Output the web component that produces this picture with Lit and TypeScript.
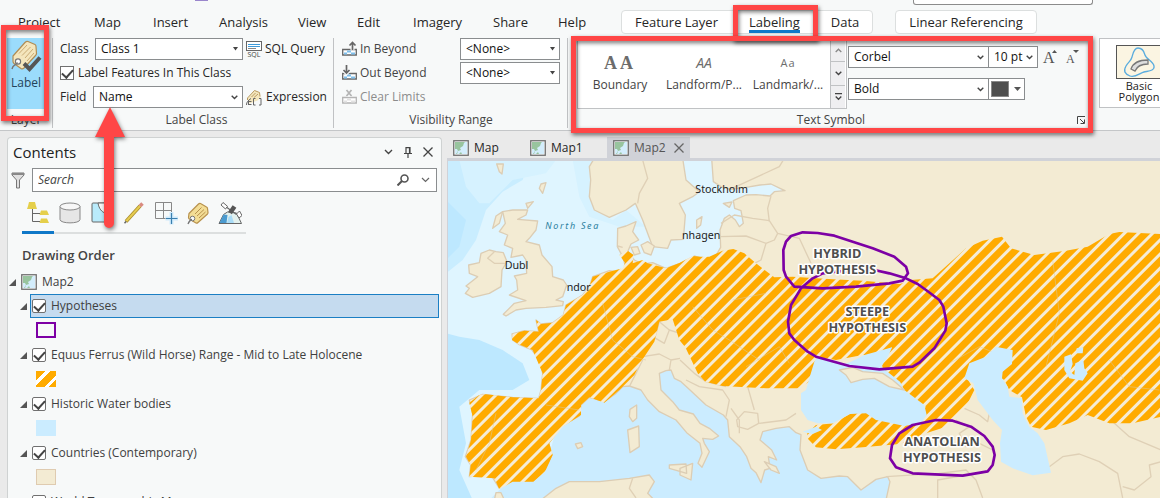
import { LitElement, html, css } from "lit";
import { customElement } from "lit/decorators.js";
import { classMap } from "lit/directives/class-map.js";

const caret = html`<svg class="mark" width="5" height="4" viewBox="0 0 5 4"><path d="M0 0h5L2.5 3.4z" fill="#444" /></svg>`;
const chevron = html`<svg class="mark" width="7" height="5" viewBox="0 0 7 5"><path d="M.7.8 3.5 3.6 6.3.8" fill="none" stroke="#444" stroke-width="1.4" /></svg>`;

const tagIcon = html`<svg width="24" height="24" viewBox="0 0 24 24">
  <path d="M3 12.500 12.500 3q1-1 2-.5l6 3.500q1 .5 1 1.500l.5 4q0 1-.5 1.500L12 21.500q-1 1-2 .5l-6-3.500q-1.500-.5-1.500-2z" fill="#f3dd95" stroke="#b8924e" stroke-width="1.200" />
  <path d="m9 13 6.500-6.500M11 15l7-6.500M13 17l6.500-6" stroke="#b8924e" fill="none" />
  <circle cx="6.500" cy="17.500" r="2.300" fill="#f7f9f9" stroke="#777" />
  <path d="M6 18.500C4 19 3 20.500 2 23" stroke="#777" stroke-width="1.300" fill="none" />
</svg>`;

const bigTag = html`<svg width="32" height="32" viewBox="0 0 32 32">
  <path d="M3 16 15 2.500q1.500-1.500 3-1l7 3q1 .5 1 2l.5 7q0 1-1 2L14 28q-1.500 1.500-3 .5l-7-5q-1-1-1-2z" fill="#f4e6bd" stroke="#b08d55" stroke-width="1.200" />
  <path d="m9 13.500 8-8.500M12 15.500 20.500 7M15 18l8-9M17 21l7-8" stroke="#c9ab74" fill="none" />
  <circle cx="8" cy="21.500" r="2.600" fill="#fff" stroke="#777" stroke-width="1.200" />
  <path d="M7.500 22.500C6 26 3 24 2 29" stroke="#777" stroke-width="1.400" fill="none" />
  <path d="m14 23.500 5.500 5.500L30 17.500" stroke="#555" stroke-width="4" fill="none" />
</svg>`;

const sqlIcon = html`<svg width="16" height="18" viewBox="0 0 16 18">
  <rect x=".5" y="1.500" width="15" height="9" fill="#fff" stroke="#666" />
  <path d="M2 4.500h12M2 6.500h12" stroke="#3d9ad9" /><path d="M2 8.500h8" stroke="#888" />
  <text x="8" y="17" font-size="7" text-anchor="middle" fill="#444">SQL</text>
</svg>`;

const exprIcon = html`<svg width="17" height="17" viewBox="0 0 17 17">
  <path d="M1.500 9.500 8.500 1.500l5 2 1 5-3 3-8 3z" fill="#f4e6bd" />
  <path d="m1.500 11v-2L8.500 1.500l5 2 .5 4M5.500 8l4-4M8 8.500l4-3.500" stroke="#b89a60" fill="none" />
  <path d="M.5 16C.5 13 2 11.500 5 9.500M2.500 12.500h3M2.500 15.500h3M2.500 12v4M9.500 9.500H7.500v6.500h2M13 9.500h2v6.500h-2" stroke="#666" fill="none" />
</svg>`;

const beyondIcon = (kind: "in" | "out" | "clear") => {
  const c = kind === "clear" ? "#b4b4b4" : "#666";
  const b = kind === "clear" ? "#e2e2e2" : "#7fc0ec";
  const arrow =
    kind === "in" ? "M10.500 9V1.500M7.500 4.500l3-3 3 3" : kind === "out" ? "M4.500 0v7.500M1.500 5l3 3 3-3" : "m4.500 1 5 6m0-6-5 6";
  return html`<svg width="15" height="16" viewBox="0 0 15 16">
    <path d="M.7 8.500h13.600v5.500H.7z" fill="#fff" stroke=${c} stroke-width="1.300" />
    <path d="M2 11.500h3v2H2zM5 9.500h4v2H5zM9 11.500h4v2H9z" fill=${b} />
    <path d=${arrow} stroke="#f7f9f9" stroke-width="4" fill="none" />
    <path d=${arrow} stroke=${c} stroke-width="1.700" fill="none" />
  </svg>`;
};

const mapIcon = html`<svg width="16" height="16" viewBox="0 0 16 16">
  <rect x=".75" y=".75" width="14.500" height="14.500" fill="#fff" stroke="#6e6e6e" stroke-width="1.300" />
  <rect x="2" y="2" width="12" height="12" fill="#98c49e" />
  <path d="M14 2v12H9l-1-2-2 2H4l1-3 3-1-1-2 3-2 1-3 1-1z" fill="#d3edfc" />
  <path d="M2 9h2l1 2-2 3H2z" fill="#d3edfc" />
</svg>`;

const tocIcons = [
  html`<svg width="24" height="24" viewBox="0 0 24 24"><path d="M6.500 8v12.500H14M6.500 12.500H14" stroke="#666" fill="none" /><path d="M3 1h6l1 4 1 3H1l1-3zM15 9.500h6l2 4.500h-9.500zM15 17.500h6l2 4.500h-9.500z" fill="#e5cf4b" /></svg>`,
  html`<svg width="24" height="24" viewBox="0 0 24 24"><path d="M2 5.500v13c0 4.500 20 4.500 20 0v-13" fill="#e6e6e6" stroke="#888" /><ellipse cx="12" cy="5.500" rx="10" ry="3.500" fill="#f7f7f7" stroke="#888" /></svg>`,
  html`<svg width="24" height="24" viewBox="0 0 24 24"><rect x="2" y="2" width="20" height="19" rx="1" fill="#b9ebfb" stroke="#666" /><path d="M8 2c1 6 4 9 7 10l7-10z" fill="#f7f9f9" stroke="#666" /></svg>`,
  html`<svg width="24" height="24" viewBox="0 0 24 24"><path d="M4 20.500 18 5" stroke="#a98d2c" stroke-width="3.600" /><path d="M4 20.500 18 5" stroke="#e6cc50" stroke-width="2" /><path d="m18 5 2.500-2.500" stroke="#d98a80" stroke-width="3.500" /><path d="m2.500 22.200 1.800-2" stroke="#666" stroke-width="1.500" /></svg>`,
  html`<svg width="24" height="24" viewBox="0 0 24 24"><path d="M1.500 1.500h16v16h-16zM9.500 1.500v16M1.500 9.500h16" fill="none" stroke="#888" /><path d="M17.500 11v12.500M11.500 17.500H24" stroke="#cfeafc" stroke-width="4" /><path d="M17.500 12v11M12 17.500h11.500" stroke="#3a7fae" stroke-width="1.200" /></svg>`,
  tagIcon,
  html`<svg width="24" height="24" viewBox="0 0 24 24">
    <path d="m1 22.500 4.500-9 4-2.500 9 1L23.500 22.500z" fill="#e3f1ee" stroke="#666" /><path d="m1.500 22 4-8.500 4 .5-1 8z" fill="#4b9bd0" /><path d="m9 22 1.500-6 3-2 2.500 8z" fill="#a9dcf7" />
    <path d="m5 1.500 4.500 3.800L7.500 8 3 4zM18.500 13l3-3 2.500 4.500-3 2.500z" fill="#fff" stroke="#666" />
    <path d="m9 6.500 9.500 7" stroke="#666" stroke-width="1.200" /><path d="m12 12 4.500-6.500" stroke="#555" stroke-width="4.500" /></svg>`,
];

interface Layer { name: string; cls: string; selected?: boolean }
const layers: Layer[] = [
  { name: "Hypotheses", cls: "outline", selected: true },
  { name: "Equus Ferrus (Wild Horse) Range - Mid to Late Holocene", cls: "striped" },
  { name: "Historic Water bodies", cls: "water" },
  { name: "Countries (Contemporary)", cls: "land" },
  { name: "World Topographic Map", cls: "land" },
];

@customElement("map-canvas")
class MapCanvas extends LitElement {
  static styles = css`
    :host { display: block; min-height: 0; overflow: hidden; background: #f3ebd3; }
    svg { display: block; width: 100%; height: 100%; }
    .land { fill: #f3ebd3; stroke: #dccdb4; stroke-width: 4; stroke-linejoin: round; }
    .border { fill: none; stroke: #dfd0b6; stroke-width: 4; stroke-linejoin: round; }
    .faint { fill: none; stroke: #d8c9a8; stroke-width: 3; opacity: 0.5; }
    .sea { fill: #cbecff; }
    .ring { fill: none; stroke: #7d00a5; stroke-width: 8; stroke-linejoin: round; }
    .place { font: 32px "Noto Sans", sans-serif; fill: #222; }
    .ocean { font: italic 27px "Noto Sans", sans-serif; fill: #2c7f9e; letter-spacing: 5px; }
    .label { font: bold 38px "Open Sans", sans-serif; fill: #4e4e4e; stroke: #fff; stroke-width: 9; stroke-linejoin: round; paint-order: stroke; text-anchor: middle; }
  `;
  render() {
    return html`<svg viewBox="6 3 2136 1011" preserveAspectRatio="xMinYMin slice" role="img" aria-label="Map of Europe">
      <defs>
        <pattern id="hatch" width="30" height="30" patternUnits="userSpaceOnUse" patternTransform="rotate(-45)">
          <rect width="30" height="30" fill="#ffab00" /><rect width="30" height="9" fill="#f5ecd6" />
        </pattern>
      </defs>
      <rect width="2145" height="1020" fill="#dff5ff" />
      <path fill="#c9edff" d="M0 0H250L230 60 170 95 120 150 90 240 50 300 0 340z" />
      <path fill="#d6f2ff" d="M40 0H330L300 40 200 60 130 130 100 130 60 80zM380 0H440V150L500 180 540 150 600 200 520 200 430 170 400 110z" />
      <path fill="#bde8ff" d="M0 120 60 180 40 260 0 300zM0 520 40 530 100 540 170 570 230 610 250 660 200 690 100 690 40 740 60 850 40 930 80 1020H0z" />
      <path class="sea" d="M130 1020 190 960 300 920 330 810 420 710 560 670 660 620 1100 740 1350 900V1020z" />

      <path class="land" d="M797 -5 802 65 825 80 852 88 900 82 942 75 975 72 1002 85 1017 92 985 95 972 108 930 104 900 105 862 122 866 145 885 152 892 190 880 200 868 180 850 165 835 175 822 210 824 262 808 290 775 298 745 288 702 310 660 325 620 308 590 312 565 300 545 275 555 252 578 240 560 215 570 185 540 198 515 205 514 260 530 290 540 325 515 335 490 332 440 350 430 380 410 405 360 435 352 465 320 488 285 492 270 480 278 515 235 512 198 522 200 540 218 553 258 570 280 600 290 640 285 690 278 715 200 712 110 703 70 720 80 760 75 840 58 890 74 915 70 950 135 945 160 985 195 962 260 962 295 930 318 885 308 850 345 800 400 768 405 735 430 712 475 725 510 700 530 680 550 678 585 690 605 720 640 755 690 780 722 818 762 850 768 880 756 910 768 922 790 875 775 850 770 835 800 838 818 828 790 805 762 790 742 762 700 750 680 725 645 690 640 640 660 632 675 630 685 655 705 665 732 690 780 735 832 765 845 780 850 830 882 860 902 890 915 925 930 938 945 968 956 930 972 925 967 890 992 900 977 870 942 840 950 815 990 805 1030 800 1050 818 1065 824 1062 870 1085 930 1125 955 1180 948 1205 950 1245 990 1290 958 1325 950 1332 965 1320 1020H2150V-5z" />
      <path class="land" d="M445 -5 430 20 434 60 430 110 445 150 490 172 540 150 568 130 590 180 620 260 665 265 675 240 712 238 718 165 700 130 740 110 760 95 720 60 710 -5z" />
      <path class="land" d="M170 155 200 150 245 150 240 165 215 178 275 183 270 210 250 235 240 245 280 255 288 285 318 320 320 350 352 360 362 375 350 410 330 420 352 425 350 437 300 442 240 445 210 450 180 468 172 463 205 430 240 422 190 405 215 390 212 360 205 348 242 340 240 300 230 285 195 292 200 265 175 255 185 225 160 215 178 190z" />
      <path class="land" d="M105 280 130 270 150 275 172 278 183 305 168 330 165 380 130 400 80 412 58 400 70 385 60 378 95 350 70 340 68 315 100 308z" />
      <path class="land" d="M150 168 170 155 160 190 140 205zM285 72 300 68 290 100 280 85zM240 130 262 125 245 145zM152 12H172L168 42 160 35zM555 262 575 260 582 280 565 285zM585 255 605 245 625 258 615 285 595 278z" />
      <path class="land" d="M752 180 768 170 764 195 752 205zM832 130 858 126 850 142zM552 748 572 735 572 775 560 785 550 770zM545 810 578 798 580 860 552 878zM388 852 405 848 410 860 395 866zM670 915 720 912 722 940 670 925zM702 925 740 910 735 960 702 945zM955 905 990 920 1000 940 975 930z" />
      <path class="land" d="M145 1020 150 998 165 998 175 1020zM285 1020 330 985 370 965 460 965 550 955 610 945 625 965 605 1000 625 1020z" />

      <g class="border">
        <path d="M590 0 605 55 580 100 575 130M145 275 125 295 145 310 180 310M515 258 530 262M640 485 670 510 702 520M670 510 655 550 620 530M590 590 640 582 675 600 702 595M550 680 565 650 590 600M675 600 670 630M560 955 550 985 570 1014M640 485 625 540" />
        <path d="M852 88 1000 20 1012 0M975 108 965 145 970 185M825 190 865 165 920 175 970 182 995 220 985 240 960 250 900 228 822 230M995 220 1060 235 1095 310M960 250 945 300 925 310M702 600 745 640 780 665 840 680M720 660 760 680 830 690 850 720 840 770M855 745 880 780 880 820M872 780 895 755 935 760 938 790 905 808 875 800zM905 680 925 750M940 790 1020 780 1050 760M1320 950 1480 940 1560 930 1590 960 1610 1014M1475 1014V960L1560 945" />
        <path d="M1555 745 1600 765 1625 785 1632 750M1530 780 1570 800 1540 820 1560 860 1600 850 1640 870M1810 920 1850 890 1900 882 1960 905 2015 940 2030 1014M2030 980 2065 990 2115 950 2110 915 2145 905M2000 785 2050 830 2145 870" />
      </g>

      <path fill="url(#hatch)" d="M520 285 545 272 563 285 560 310 590 300 605 310 660 325 702 308 740 288 765 290 790 290 830 272 862 267 895 280 930 310 985 352 1040 350 1160 358 1250 362 1362 372 1395 360 1460 355 1560 265 1610 242 1668 230 1695 265 1765 285 1860 272 1925 260 1990 222 2020 216 2145 222V770L2060 790 1990 790 1925 765 1870 790 1800 810 1755 800 1740 770 1728 712 1690 690 1675 660 1640 640 1560 650 1585 690 1560 740 1500 800 1440 820 1362 852 1250 862 1170 868 1110 862 1084 835 1084 820 1110 795 1165 790 1215 760 1265 757 1320 785 1400 790 1440 740 1400 720 1360 685 1310 625 1305 590 1250 585 1170 600 1110 590 1100 660 1055 685 960 685 830 678 778 665 755 640 718 562 700 540 680 478 640 485 625 545 585 605 565 645 520 690 475 728 430 712 405 735 405 765 350 800 310 850 320 885 297 935 262 965 200 965 160 988 145 955 70 950 74 915 60 890 75 840 80 770 70 728 100 705 120 703 200 712 278 715 285 690 290 640 260 570 218 553 198 540 200 522 235 512 278 515 270 480 285 492 320 488 352 465 360 435 410 405 430 380 440 350 490 335 530 325 537 308z" />
      <g class="faint"><path d="M470 430 500 540 560 590 600 600M300 735 400 750M150 760 130 850 90 930M740 440 800 510 850 540 940 600M860 420 960 400M1510 610 1600 560 1650 580M1820 300 1840 460 1800 620M1990 600 2050 680 2140 690M900 620 1000 560 1030 610" /></g>

      <path class="sea" d="M1105 605 1115 590 1150 600 1185 615 1215 605 1255 585 1310 570 1338 562 1325 590 1305 620 1330 640 1362 665 1375 690 1435 735 1442 765 1425 790 1375 798 1330 788 1290 780 1260 760 1212 762 1160 790 1115 790 1085 780 1065 750 1065 700 1080 690 1090 655z" />
      <path class="land" d="M1180 630 1220 622 1250 635 1310 640 1340 660 1375 690 1330 680 1285 655 1250 658 1215 668 1200 645z" />
      <path class="sea" d="M1240 618 1280 590 1338 562 1325 590 1305 620 1312 636 1260 632zM1070 815 1110 800 1128 810 1100 822z" />
      <path class="sea" d="M1650 560 1672 565 1700 570 1698 612 1670 635 1668 655 1685 680 1690 710 1728 715 1730 760 1750 800 1775 820 1795 850 1815 938 1760 946 1700 925 1665 905 1662 850 1668 810 1640 780 1595 720 1582 670 1555 655 1570 610 1620 590z" />
      <path class="sea" d="M1855 590 1875 583 1880 612 1872 635 1885 645 1888 610 1912 600 1915 625 1925 640 1910 662 1870 655 1855 630zM1892 565 1912 562 1910 580 1890 580z" />
      <path class="sea" d="M1005 815 1020 810 1015 820zM1170 975 1185 960 1190 985z" />

      <text class="ocean" x="298" y="207">North Sea</text>
      <text class="place" x="176" y="326">Dubl</text>
      <text class="place" x="362" y="393">ndor</text>
      <text class="place" x="748" y="99">Stockholm</text>
      <text class="place" x="708" y="236">nhagen</text>

      <path class="ring" d="M1070 217 1115 219 1165 227 1280 265 1345 290 1380 320 1386 340 1370 362 1330 370 1230 380 1130 385 1045 380 1020 350 1013 330 1012 270 1020 245 1035 228z" />
      <path class="ring" d="M1130 340 1175 334 1285 330 1330 340 1380 355 1415 372 1440 390 1480 420 1492 440 1502 490 1498 512 1465 565 1420 608 1400 620 1300 628 1210 618 1110 590 1085 575 1045 540 1030 520 1026 485 1035 435 1065 385 1100 355z" />
      <path class="ring" d="M1400 795 1470 780 1520 782 1575 800 1615 828 1640 860 1646 885 1640 915 1625 934 1550 947 1400 940 1350 922 1332 895 1338 855 1360 820z" />
      <text class="label"><tspan x="1174" y="294">HYBRID</tspan><tspan x="1174" y="342">HYPOTHESIS</tspan></text>
      <text class="label"><tspan x="1264" y="468">STEEPE</tspan><tspan x="1264" y="516">HYPOTHESIS</tspan></text>
      <text class="label"><tspan x="1488" y="858">ANATOLIAN</tspan><tspan x="1488" y="906">HYPOTHESIS</tspan></text>
    </svg>`;
  }
}

@customElement("app-root")
class AppRoot extends LitElement {
  static styles = css`
    :host { display: flex; flex-direction: column; position: relative; height: 100vh; overflow: hidden; background: #eaeaea; color: #262626; font: 12px/16px "Open Sans", sans-serif; }
    * { box-sizing: border-box; }
    button, input, select { font: inherit; color: inherit; margin: 0; }
    button { border: 0; padding: 0; background: none; text-align: left; }
    svg { display: block; flex: none; }
    .top { background: #f7f9f9; border-bottom: 1px solid #c4c6c8; flex: none; }
    .titlebar { display: flex; height: 10px; padding: 0 67px 0 195px; justify-content: space-between; }
    .logo { width: 13px; height: 1px; background: #9a86cc; }
    .command { width: 180px; height: 5px; border: 1px solid #8c8c8c; border-top: 0; border-radius: 0 0 3px 3px; background: #fff; }
    .tabs { display: flex; height: 25px; padding-left: 18px; font-size: 13px; align-items: flex-start; }
    .plain { display: grid; grid-template-columns: 76px 59px 66px 79px 59px 56px 80px 65px 63px; }
    .tabs button { height: 24px; }
    .set { display: flex; gap: 31px; padding: 0 13px; border: 1px solid #dcdfdf; border-radius: 4px; background: #fff; height: 24px; }
    .set button { height: 22px; }
    .set + .set { margin-left: 22px; }
    .set .active { border-bottom: 3px solid #0f78c8; padding-top: 3px; }
    .ribbon { display: flex; padding-top: 3px; height: 95px; }
    .group { display: flex; flex-direction: column; border-right: 1px solid #c0c2c4; height: 90px; }
    .body { display: flex; flex: 1; min-height: 0; }
    .caption { text-align: center; color: #444; height: 16px; line-height: 16px; flex: none; }
    .layer { width: 53px; }
    .labelbtn { width: 38px; margin-left: 7px; height: 71px; background: #9bdcfc; display: flex; flex-direction: column; align-items: center; gap: 3px; padding-top: 2px; color: #24435a; }
    .class { width: 281px; padding-left: 7px; }
    .rows { display: flex; flex-direction: column; gap: 2px; width: 100%; }
    .row { display: flex; align-items: center; height: 22px; }
    .row .lab { flex: 1; white-space: nowrap; }
    .cmd { display: flex; align-items: center; gap: 3px; width: 90px; padding-left: 3px; white-space: nowrap; }
    .combo { display: grid; height: 22px; }
    .combo select { grid-area: 1 / 1; appearance: none; border: 1px solid #8a8d8f; border-radius: 0; background: #fff; padding: 0 5px; width: 100%; height: 22px; color: #111; outline: 0; }
    .combo .mark { grid-area: 1 / 1; align-self: center; justify-self: end; margin-right: 5px; pointer-events: none; }
    .w148 { width: 148px; } .w150 { width: 150px; } .w100 { width: 100px; } .w141 { width: 141px; } .w50 { width: 50px; }
    input[type="checkbox"] { appearance: none; width: 14px; height: 14px; border: 1px solid #707070; background: #fff; display: grid; place-items: center; flex: none; }
    input[type="checkbox"]:checked::after { content: ""; width: 9px; height: 5px; border: solid #444; border-width: 0 0 2px 2px; transform: translateY(-1px) rotate(-48deg); }
    .check { display: flex; gap: 4px; align-items: center; }
    .vis { width: 234px; padding: 0 7px 0 8px; }
    .vis .lab { display: flex; align-items: center; gap: 3px; color: #444; }
    .vis .off { color: #8c8c8c; }
    .symbol { width: 524px; padding: 0 7px 0 9px; border: 0; }
    .symbol .caption { display: grid; grid-template-columns: 1fr auto 1fr; }
    .symbol .caption svg { justify-self: end; align-self: center; }
    .gallery { display: grid; grid-template-columns: repeat(3, 84px) 15px; width: 270px; height: 71px; border: 1px solid #c0c2c4; background: #fff; color: #444; }
    .gallery .item { display: flex; flex-direction: column; align-items: center; padding-top: 14px; gap: 4px; white-space: nowrap; }
    .gallery .glyph { height: 20px; line-height: 20px; color: #6c6c6c; }
    .serif { font: bold 18px "Liberation Serif", serif; letter-spacing: 3px; }
    .ital { font-style: italic; font-size: 14px; }
    .small { font-size: 11px; letter-spacing: 1px; }
    .scroll { display: grid; grid-template-rows: 1fr 1fr 1fr; gap: 1px; background: #c0c2c4; border-left: 1px solid #c0c2c4; }
    .scroll button { background: #efeff1; display: grid; place-items: center; }
    .fonts { display: grid; grid-template-columns: 141px auto; grid-template-rows: 22px 22px; row-gap: 10px; padding: 8px 0 0 1px; align-content: start; }
    .fonts .side { display: flex; margin-left: -1px; }
    .sizes { display: flex; gap: 6px; padding-left: 4px; align-items: center; font-family: "Liberation Serif", serif; }
    .sizes text { fill: #555; }
    .color { width: 37px; height: 22px; border: 1px solid #8a8d8f; background: #fff; display: flex; align-items: center; gap: 5px; padding-left: 2px; }
    .color i { width: 18px; height: 16px; background: #4e4e4e; border: 1px solid #888; }
    .polys { margin-left: 7px; flex: 1; min-width: 0; overflow: hidden; height: 70px; border: 1px solid #c0c2c4; border-right: 0; background: #fff; line-height: 11px; font-size: 11px; display: flex; padding: 6px 0 0 16px; }
    .poly { display: flex; flex-direction: column; align-items: center; width: 46px; flex: none; text-align: center; gap: 1px; color: #222; }
    .main { display: flex; flex: 1; min-height: 0; padding: 6px 0 0 7px; }
    .contents { width: 435px; flex: none; background: #f7f9f9; border: 1px solid #cfd2d2; border-bottom: 0; border-radius: 4px 4px 0 0; overflow: hidden; }
    .head { display: flex; align-items: center; height: 30px; padding: 0 8px 2px 5px; gap: 11px; }
    .head h2 { font: 15px/20px "Open Sans", sans-serif; margin: 0; flex: 1; color: #222; }
    .find { display: flex; align-items: center; padding: 0 4px 0 3px; gap: 7px; height: 24px; }
    .box { display: flex; flex: 1; align-items: center; border: 1px solid #8a8d8f; background: #fff; height: 24px; padding: 0 6px 0 5px; gap: 12px; }
    .box input { border: 0; outline: 0; flex: 1; padding: 0; background: none; min-width: 0; }
    .box input::placeholder { font-style: italic; color: #444; opacity: 1; }
    .views { display: grid; grid-template-columns: repeat(7, 32px); width: 224px; margin: 7px 0 0 14px; border-bottom: 2px solid #dcdfdf; }
    .views button { display: grid; place-items: center; height: 35px; padding-bottom: 4px; margin-bottom: -2px; border-bottom: 3px solid transparent; }
    .views button.on { border-color: #0f78c8; }
    h3 { font: 600 13px/20px "Open Sans", sans-serif; margin: 11px 0 5px 14px; color: #444; }
    ul { list-style: none; margin: 0; padding: 0; color: #404040; }
    .node { display: flex; align-items: center; height: 24px; gap: 5px; padding-left: 1px; }
    .leaf { display: flex; align-items: center; height: 24px; padding: 0 2px 0 12px; gap: 3px; }
    .name { flex: 1; display: flex; align-items: center; gap: 5px; height: 24px; padding-left: 1px; border: 1px solid transparent; white-space: nowrap; }
    .name.sel { background: #c5dbef; border-color: #1b7fc4; }
    .name input { border-radius: 2px; }
    .swatch { width: 20px; height: 16px; margin: 4px 0 5px 28px; }
    .outline { border: 2px solid #7d00a5; }
    .striped { background: repeating-linear-gradient(135deg, #ffab00 0 7px, #fff 7px 10px); }
    .water { background: #cbecff; }
    .swatch.land { background: #f3ebd3; border: 1px solid #dfcbb0; }
    .view { flex: 1; min-width: 0; display: flex; flex-direction: column; margin-left: 5px; }
    .maps { display: flex; height: 24px; border-bottom: 3px solid #d0d2d8; }
    .maps button { display: flex; align-items: center; gap: 5px; height: 22px; padding: 0 6px; }
    .maps .first { width: 77px; } .maps .second { width: 83px; }
    .maps .on { background: #d0d2d8; color: #555; width: 83px; }
    .maps .on span { flex: 1; }
    map-canvas { flex: 1; border-left: 1px solid #d0d2d8; }
    .note { position: absolute; border: 5px solid #ff4646; pointer-events: none; filter: drop-shadow(1px 2px 2px rgba(0, 0, 0, 0.55)); }
    .n1 { left: 1px; top: 25px; width: 48px; height: 96px; }
    .n2 { left: 733px; top: 5px; width: 85px; height: 36px; }
    .n3 { left: 571px; top: 36px; width: 522px; height: 97px; }
    .arrow { position: absolute; left: 94px; top: 107px; pointer-events: none; filter: drop-shadow(1px 2px 2px rgba(0, 0, 0, 0.5)); }
  `;

  combo(value: string, width: string, label: string, mark = chevron) {
    return html`<div class="combo ${width}"><select aria-label=${label}><option>${value}</option></select>${mark}</div>`;
  }

  ribbon() {
    return html`<div class="ribbon">
      <section class="group layer">
        <div class="body"><button class="labelbtn">${bigTag}<span>Label</span></button></div>
        <div class="caption">Layer</div>
      </section>
      <section class="group class">
        <div class="body"><div class="rows">
          <div class="row"><span class="lab">Class</span>${this.combo("Class 1", "w148", "Class", caret)}<button class="cmd">${sqlIcon}SQL Query</button></div>
          <div class="row"><label class="check"><input type="checkbox" checked />Label Features In This Class</label></div>
          <div class="row"><span class="lab">Field</span>${this.combo("Name", "w150", "Field")}<button class="cmd">${exprIcon}Expression</button></div>
        </div></div>
        <div class="caption">Label Class</div>
      </section>
      <section class="group vis">
        <div class="body"><div class="rows">
          <div class="row"><span class="lab">${beyondIcon("in")}In Beyond</span>${this.combo("<None>", "w100", "In Beyond", caret)}</div>
          <div class="row"><span class="lab">${beyondIcon("out")}Out Beyond</span>${this.combo("<None>", "w100", "Out Beyond", caret)}</div>
          <div class="row"><button class="lab off" disabled>${beyondIcon("clear")}Clear Limits</button></div>
        </div></div>
        <div class="caption">Visibility Range</div>
      </section>
      <section class="group symbol">
        <div class="body">
          <div class="gallery">
            <button class="item"><span class="glyph serif">AA</span>Boundary</button>
            <button class="item"><span class="glyph ital">AA</span>Landform/P...</button>
            <button class="item"><span class="glyph small">Aa</span>Landmark/...</button>
            <div class="scroll">
              <button aria-label="Up"><svg width="7" height="5" viewBox="0 0 7 5"><path d="M.7 4 3.500 1.200 6.300 4" fill="none" stroke="#888" stroke-width="1.300" /></svg></button>
              <button aria-label="Down">${chevron}</button>
              <button aria-label="More"><svg width="7" height="8" viewBox="0 0 7 8"><path d="M0 .7h7M.7 3.500 3.500 6.300 6.300 3.500" fill="none" stroke="#444" stroke-width="1.300" /></svg></button>
            </div>
          </div>
          <div class="fonts">
            ${this.combo("Corbel", "w141", "Font")}
            <div class="side">${this.combo("10 pt", "w50", "Size")}
              <div class="sizes">
                <button aria-label="Larger"><svg width="17" height="22" viewBox="0 0 17 22"><text x="1" y="17" font-size="16">A</text><path d="M10 7h5l-2.500-3z" fill="#555" /></svg></button>
                <button aria-label="Smaller"><svg width="17" height="22" viewBox="0 0 17 22"><text x="1" y="17" font-size="12">A</text><path d="M8 4h6l-3 3z" fill="#555" /></svg></button>
              </div>
            </div>
            ${this.combo("Bold", "w141", "Style")}
            <div class="side"><button class="color" aria-label="Colour"><i></i><svg width="7" height="4" viewBox="0 0 7 4"><path d="M0 0h7L3.500 4z" fill="#555" /></svg></button></div>
          </div>
        </div>
        <div class="caption"><span></span>Text Symbol<svg width="8" height="8" viewBox="0 0 8 8"><path d="M.5 8V.5H8M3 3l4 4M7.500 3.500v4h-4" fill="none" stroke="#444" /></svg></div>
      </section>
      <div class="polys"><button class="poly">
        <svg width="46" height="34" viewBox="0 0 46 34"><rect x=".5" y=".5" width="45" height="33" fill="#fbf5e2" stroke="#555" /><path d="M22 3c4 0 6 3 7 7s8 6 9 11-6 5-10 6-9 6-14 4-7-5-4-10 5-5 6-9 2-9 6-9z" fill="none" stroke="#5aacde" stroke-width="1.300" /><path d="M15 24c2-6 8-9 17-9v4c-7 0-11 2-13 7z" fill="#ddd" stroke="#777" stroke-width="1.300" /></svg>
        Basic Polygon</button></div>
    </div>`;
  }

  contents() {
    return html`<aside class="contents">
      <div class="head"><h2>Contents</h2>
        <button aria-label="Options"><svg width="9" height="6" viewBox="0 0 9 6"><path d="m1 1 3.500 3.500L8 1" fill="none" stroke="#444" stroke-width="1.400" /></svg></button>
        <button aria-label="Pin"><svg width="8" height="11" viewBox="0 0 8 11"><path d="M2 6V.7h4V6M0 6.500h8M4 6.500V11M5.500 1v5" fill="none" stroke="#444" stroke-width="1.200" /></svg></button>
        <button aria-label="Close"><svg width="10" height="10" viewBox="0 0 10 10"><path d="m.5.500 9 9m0-9-9 9" stroke="#444" stroke-width="1.300" /></svg></button>
      </div>
      <div class="find">
        <svg width="14" height="17" viewBox="0 0 14 17"><path d="M1 1h12v2L8.500 8v8h-3V8L1 3z" fill="#e0e0e0" stroke="#777" /><path d="M1 1h12v2H1z" fill="#888" /></svg>
        <div class="box"><input type="text" placeholder="Search" aria-label="Search" />
          <svg width="12" height="12" viewBox="0 0 12 12"><circle cx="7.500" cy="4.500" r="3.500" fill="none" stroke="#555" stroke-width="1.600" /><path d="m5 7-4.500 4.500" stroke="#555" stroke-width="2" /></svg>
          <svg width="9" height="6" viewBox="0 0 9 6"><path d="m1 1 3.500 3.500L8 1" fill="none" stroke="#666" stroke-width="1.200" /></svg></div>
      </div>
      <div class="views">${tocIcons.map((icon, i) => html`<button class=${classMap({ on: i === 0 })} aria-label="View ${i + 1}">${icon}</button>`)}</div>
      <h3>Drawing Order</h3>
      <ul>
        <li class="node"><svg width="7" height="7" viewBox="0 0 7 7"><path d="M7 0v7H0z" fill="#555" /></svg>${mapIcon}Map2</li>
        ${layers.map((l) => html`<li>
          <div class="leaf"><svg width="7" height="7" viewBox="0 0 7 7"><path d="M7 0v7H0z" fill="#555" /></svg>
            <label class=${classMap({ name: true, sel: !!l.selected })}><input type="checkbox" checked />${l.name}</label></div>
          <div class="swatch ${l.cls}"></div></li>`)}
      </ul>
    </aside>`;
  }

  render() {
    const tabs = ["Project", "Map", "Insert", "Analysis", "View", "Edit", "Imagery", "Share", "Help"];
    return html`
      <header class="top">
        <div class="titlebar"><div class="logo"></div><div class="command"></div></div>
        <nav class="tabs">
          <div class="plain">${tabs.map((t) => html`<button>${t}</button>`)}</div>
          <div class="set"><button>Feature Layer</button><button class="active">Labeling</button><button>Data</button></div>
          <div class="set"><button>Linear Referencing</button></div>
        </nav>
        ${this.ribbon()}
      </header>
      <div class="main">
        ${this.contents()}
        <section class="view">
          <div class="maps">
            <button class="first">${mapIcon}Map</button><button class="second">${mapIcon}Map1</button>
            <button class="on">${mapIcon}<span>Map2</span><svg width="10" height="10" viewBox="0 0 10 10"><path d="m.5.500 9 9m0-9-9 9" stroke="#666" stroke-width="1.300" /></svg></button>
          </div>
          <map-canvas></map-canvas>
        </section>
      </div>
      <div class="note n1"></div><div class="note n2"></div><div class="note n3"></div>
      <svg class="arrow" width="32" height="126" viewBox="0 0 32 126"><path d="M16 0 31 30H20v86a5 5 0 0 1-10 0V30H1z" fill="#ff4646" /></svg>
    `;
  }
}
